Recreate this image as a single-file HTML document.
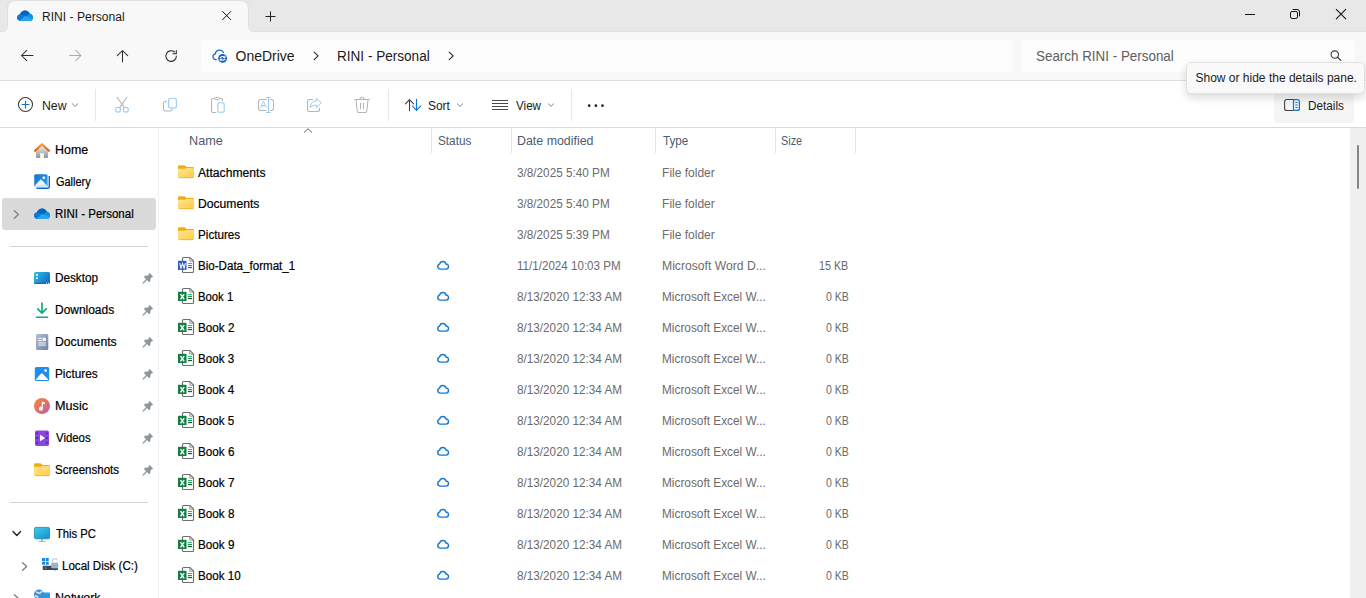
<!DOCTYPE html>
<html lang="en">
<head>
<meta charset="utf-8">
<title>RINI - Personal</title>
<style>
*{box-sizing:border-box;margin:0;padding:0}
html,body{width:1366px;height:598px;overflow:hidden;background:#fff}
body{font-family:"Liberation Sans",sans-serif;font-size:12px;color:#1a1a1a;position:relative}
svg{display:block;overflow:visible}
.t{position:absolute;white-space:nowrap;line-height:16px;transform-origin:0 50%}
.s{color:#000;-webkit-text-stroke:.2px #000}
.i{position:absolute;display:block}
#tabbar{position:absolute;left:0;top:0;width:1366px;height:32px;background:#e8e8e8;box-shadow:inset 0 -1px 0 #dfdfdf}
#tab{position:absolute;left:8px;top:1px;width:240px;height:31px;background:#f8f8f8;border-radius:7px 7px 0 0;box-shadow:0 0 0 1px #e0e0e0;clip-path:inset(-1px -6px 0 -6px)}
#tab:before,#tab:after{content:"";position:absolute;bottom:0;width:5px;height:5px}
#tab:before{left:-5px;background:radial-gradient(circle at 0 0,transparent 3.4px,#dedede 4px,#f8f8f8 5px)}
#tab:after{right:-5px;background:radial-gradient(circle at 100% 0,transparent 3.4px,#dedede 4px,#f8f8f8 5px)}
#nav{position:absolute;left:0;top:32px;width:1366px;height:49px;background:#f8f8f8;border-bottom:1px solid #dfdfdf}
#addr{position:absolute;left:201px;top:8px;width:812px;height:32px;background:#fdfdfd;border-radius:4px}
#search{position:absolute;left:1022px;top:8px;width:333px;height:32px;background:#fdfdfd;border-radius:4px}
#tool{position:absolute;left:0;top:81px;width:1366px;height:47px;background:#fff;border-bottom:1px solid #dadada}
.vsep{position:absolute;top:8px;width:1px;height:32px;background:#e8e8e8}
#details{position:absolute;left:1274px;top:10px;width:80px;height:32px;background:#f5f5f5;border-radius:4px}
#tip{position:absolute;left:1186px;top:62px;width:179px;height:32px;background:#f9f9f9;border:1px solid #e0e0e0;border-radius:5px;box-shadow:0 4px 8px rgba(0,0,0,.14)}
#side{position:absolute;left:0;top:128px;width:159px;height:470px;background:#fff;border-right:1px solid #f1f1f1;overflow:hidden}
.sel{position:absolute;left:2px;top:70px;width:154px;height:32px;background:#dadada;border-radius:3px}
.hr{position:absolute;left:10px;width:138px;height:1px;background:#d6d6d6}
#main{position:absolute;left:159px;top:128px;width:1191px;height:470px;background:#fff;overflow:hidden}
.csep{position:absolute;top:0;width:1px;height:25px;background:#e5e5e5}
.row{position:absolute;left:0;width:860px;height:31px}
#scroll{position:absolute;left:1350px;top:128px;width:16px;height:470px;background:#f0f0f0}
#thumb{position:absolute;left:7px;top:17px;width:2px;height:44px;background:#858585;border-radius:1px}
</style>
</head>
<body>
<header id="tabbar">
  <div id="tab"></div>
  <span class="i" style="left:17px;top:10px"><svg width="16" height="11" viewBox="0 0 16 11" ><defs><clipPath id="oc1"><path d="M3.300 10.900C1.400 10.900 0 9.400 0 7.600 0 5.900 1.200 4.500 2.900 4.300 3.600 2.100 5.700 .6 8.100 .6c2 0 3.800 1.100 4.600 2.900C14.600 3.800 16 5.500 16 7.500c0 1.900-1.500 3.400-3.300 3.400z"/></clipPath></defs><g clip-path="url(#oc1)"><rect width="16" height="11.500" fill="#0f78d4"/><path d="M3 5C4 1 7 0 9 0s4 1.500 4.500 5L8.300 7.500z" fill="#0566bd"/><path d="M9 7l3.300-3.300c2 0 4 1.600 4 4.300v3.500h-4z" fill="#1690e0"/><path d="M0 8C1.500 4.400 5.500 3.800 8.300 6.100L4 11.500H0z" fill="#0f78d4"/><path d="M1.800 11.500L8.300 5.800l7.700 3.700v2z" fill="#28a8ea"/></g></svg></span>
  <span class="t" style="left:42.3px;top:8.8px;transform:scaleX(1.0069)">RINI - Personal</span>
  <span class="i" style="left:222px;top:10px"><svg width="9.4" height="9.4" viewBox="0 -0.9 9.4 9.4" ><path d="M.3 .3L9.1 9.1M9.1 .3L.3 9.1" stroke="#111" stroke-width="1"/></svg></span>
  <span class="i" style="left:265px;top:11px"><svg width="10" height="10" viewBox="-0.5 -0.5 10 10" ><path d="M5 0v10M0 5h10" stroke="#222" stroke-width="1"/></svg></span>
  <span class="i" style="left:1245px;top:14px"><svg width="10" height="1" viewBox="0 0 10 1" ><rect width="10" height="1" fill="#111"/></svg></span>
  <span class="i" style="left:1290px;top:9px"><svg width="10" height="10" viewBox="0 0 10 10" ><rect x=".5" y="2.500" width="7" height="7" rx="1.600" fill="none" stroke="#111" stroke-width="1"/><path d="M2.600 .5H7a2.500 2.500 0 0 1 2.500 2.500V7.400" fill="none" stroke="#111" stroke-width="1"/></svg></span>
  <span class="i" style="left:1335px;top:8px"><svg width="10.6" height="10.6" viewBox="-0.7 -0.8 10.6 10.6" ><path d="M.3 .3L10.299999999999999 10.299999999999999M10.299999999999999 .3L.3 10.299999999999999" stroke="#111" stroke-width="1.05"/></svg></span>
</header>
<nav id="nav">
  <span class="i" style="left:20px;top:17px"><svg width="13" height="12" viewBox="-0.7 -0.5 13 12" ><path d="M12.300 6H1M6 .8L.8 6 6 11.200" fill="none" stroke="#2b2b2b" stroke-width="1.050" stroke-linecap="round" stroke-linejoin="round"/></svg></span>
  <span class="i" style="left:68px;top:17px"><svg width="13" height="12" viewBox="-0.8 -0.5 13 12" ><path d="M.7 6H12M7 .8L12.200 6 7 11.200" fill="none" stroke="#ababab" stroke-width="1.050" stroke-linecap="round" stroke-linejoin="round"/></svg></span>
  <span class="i" style="left:116px;top:17px"><svg width="12" height="13" viewBox="-0.5 -0.5 12 13" ><path d="M6 12.300V1M.8 6.200L6 1l5.200 5.200" fill="none" stroke="#2b2b2b" stroke-width="1.050" stroke-linecap="round" stroke-linejoin="round"/></svg></span>
  <span class="i" style="left:164px;top:17px"><svg width="13" height="13" viewBox="-0.6 -0.6 13 13" ><path d="M11.800 6.500A5.300 5.300 0 1 1 9.900 2.400" fill="none" stroke="#2b2b2b" stroke-width="1.050" stroke-linecap="round"/><path d="M11.700 .8v3.400H8.300" fill="none" stroke="#2b2b2b" stroke-width="1.050" stroke-linecap="round" stroke-linejoin="round"/></svg></span>
  <div id="addr"></div>
  <span class="i" style="left:212px;top:18px"><svg width="15" height="13" viewBox="-0.6 0 15 13" ><path d="M3.700 9.600h-.5a2.850 2.850 0 0 1-.5-5.650A4.300 4.300 0 0 1 10.900 2.600" fill="none" stroke="#1c68c8" stroke-width="1.250" stroke-linecap="round"/><circle cx="10" cy="8.300" r="4.400" fill="#0f5fc6"/><path d="M7.700 7.500c1-1.300 3.300-1.400 4.500 0M12.300 9.200c-1 1.300-3.300 1.400-4.500 0" fill="none" stroke="#fff" stroke-width="1.150" stroke-linecap="round"/><path d="M12.400 5.900v1.700h-1.600M7.600 10.800V9.100h1.600" fill="none" stroke="#fff" stroke-width=".9" stroke-linecap="round" stroke-linejoin="round"/></svg></span>
  <span class="t" style="left:235.5px;top:15.1px;font-size:14px;line-height:18px;color:#1b1b1b">OneDrive</span>
  <span class="i" style="left:313px;top:19px"><svg width="6" height="9" viewBox="-0.3 -0.4 6 9" ><path d="M.8 .7L4.800 4.500.8 8.300" fill="none" stroke="#2a2a2a" stroke-width="1.15" stroke-linecap="round" stroke-linejoin="round"/></svg></span>
  <span class="t" style="left:337.4px;top:15.1px;font-size:14px;line-height:18px;color:#1b1b1b;transform:scaleX(0.9685)">RINI - Personal</span>
  <span class="i" style="left:448px;top:19px"><svg width="6" height="9" viewBox="-0.4 -0.4 6 9" ><path d="M.8 .7L4.800 4.500.8 8.300" fill="none" stroke="#2a2a2a" stroke-width="1.15" stroke-linecap="round" stroke-linejoin="round"/></svg></span>
  <div id="search"></div>
  <span class="t" style="left:1035.7px;top:15.1px;font-size:14px;line-height:18px;color:#5e5e5e;transform:scaleX(0.9572)">Search RINI - Personal</span>
  <span class="i" style="left:1330px;top:17px"><svg width="12" height="12" viewBox="0 -0.8 12 12" ><circle cx="4.800" cy="4.800" r="3.700" fill="none" stroke="#3a3a3a" stroke-width="1.100"/><path d="M7.500 7.500l3.300 3.100" stroke="#3a3a3a" stroke-width="1.250" stroke-linecap="round"/></svg></span>
</nav>
<div id="tool">
  <span class="i" style="left:17px;top:15px"><svg width="16" height="16" viewBox="-0.5 -0.5 16 16" ><circle cx="8" cy="8" r="7.050" fill="none" stroke="#3a3a3a" stroke-width="1.050"/><path d="M8 4.500v7M4.500 8h7" stroke="#0f74d4" stroke-width="1.200" stroke-linecap="round"/></svg></span>
  <span class="t" style="left:41.5px;top:16.8px;transform:scaleX(1.0217)">New</span>
  <span class="i" style="left:72px;top:22px"><svg width="6" height="4" viewBox="0 -0.4 6 4" ><path d="M.3 .4L3 3 5.700 .4" fill="none" stroke="#808080" stroke-width=".95" stroke-linecap="round" stroke-linejoin="round"/></svg></span>
  <div class="vsep" style="left:95px"></div>
  <span class="i" style="left:115px;top:16px"><svg width="14" height="16" viewBox="0 0 14 16" ><path d="M2.200 .3L9.100 10.400M11.800 .3L4.900 10.400" fill="none" stroke="#b4b4b4" stroke-width="1.050" stroke-linecap="round"/><circle cx="3" cy="12.700" r="2.450" fill="none" stroke="#9ccbf2" stroke-width="1.100"/><circle cx="10.900" cy="12.700" r="2.450" fill="none" stroke="#9ccbf2" stroke-width="1.100"/></svg></span>
  <span class="i" style="left:163px;top:16px"><svg width="14" height="14" viewBox="0 -0.5 14 14" ><path d="M3.600 3.700H2.700a2.200 2.200 0 0 0-2.200 2.200V11.200a2.200 2.200 0 0 0 2.200 2.200H7a2.200 2.200 0 0 0 2.100-1.400" fill="none" stroke="#b4b4b4" stroke-width="1.050" stroke-linecap="round"/><rect x="5.600" y=".8" width="7.800" height="9.800" rx="2.200" fill="#fdfdfd" stroke="#9ccbf2" stroke-width="1.100"/></svg></span>
  <span class="i" style="left:211px;top:16px"><svg width="14" height="16" viewBox="0 0 14 16" ><path d="M4.800 15.500H2A1.500 1.500 0 0 1 .5 14V3A1.500 1.500 0 0 1 2 1.500H10A1.500 1.500 0 0 1 11.500 3v.8" fill="none" stroke="#b4b4b4" stroke-width="1.050" stroke-linecap="round"/><rect x="3.600" y=".4" width="5" height="2.300" rx="1.150" fill="#fff" stroke="#b4b4b4" stroke-width="1"/><rect x="6.800" y="5.700" width="6.400" height="9.600" rx="1.600" fill="#fdfdfd" stroke="#9ccbf2" stroke-width="1.100"/></svg></span>
  <span class="i" style="left:258px;top:16px"><svg width="16" height="16" viewBox="0 0 16 16" ><path d="M8.700 2.500H3A2.500 2.500 0 0 0 .5 5v6A2.500 2.500 0 0 0 3 13.500H8.700M12.200 2.500H13A2.500 2.500 0 0 1 15.500 5v6A2.500 2.500 0 0 1 13 13.500h-.8" fill="none" stroke="#b4b4b4" stroke-width="1.050"/><path d="M10.500 .5v15M8.300 .5h4.400M8.300 15.500h4.400" stroke="#9ccbf2" stroke-width="1.100"/><path d="M2.600 10.600L5.500 4.200l2.900 6.400M3.600 8.700h3.800" fill="none" stroke="#9ccbf2" stroke-width="1"/></svg></span>
  <span class="i" style="left:307px;top:17px"><svg width="15" height="14" viewBox="0 0 15 14" ><path d="M5.600 1.500H2.500a2 2 0 0 0-2 2v8a2 2 0 0 0 2 2h8a2 2 0 0 0 2-2V10.300" fill="none" stroke="#b4b4b4" stroke-width="1.050" stroke-linecap="round"/><path d="M9.600 .4l4.800 4.500-4.800 4.600V7.200C6.600 7 4.500 7.800 3 9.600 3.300 6 5.600 3 9.600 2.600z" fill="none" stroke="#9ccbf2" stroke-width="1" stroke-linejoin="round"/></svg></span>
  <span class="i" style="left:354px;top:16px"><svg width="16" height="16" viewBox="0 0 16 16" ><path d="M.8 2.500h14.400M6 2.300a2 2 0 0 1 4 0M2 2.700L3.200 14a1.700 1.700 0 0 0 1.700 1.500h6.200A1.700 1.700 0 0 0 12.800 14L14 2.700M6.500 6.200v5.500M9.500 6.200v5.500" fill="none" stroke="#b4b4b4" stroke-width="1.050" stroke-linecap="round"/></svg></span>
  <div class="vsep" style="left:388px"></div>
  <span class="i" style="left:405px;top:18px"><svg width="17" height="12" viewBox="0 0 17 12" ><path d="M4.500 11.700V.7M.4 4.900L4.500 .7l4.100 4.200" fill="none" stroke="#3a3a3a" stroke-width="1.050" stroke-linecap="round" stroke-linejoin="round"/><path d="M11.500 .3v11.100M7.400 7.200l4.100 4.200 4.100-4.200" fill="none" stroke="#0f74d4" stroke-width="1.150" stroke-linecap="round" stroke-linejoin="round"/></svg></span>
  <span class="t" style="left:428.1px;top:16.8px;transform:scaleX(0.9953)">Sort</span>
  <span class="i" style="left:457px;top:22px"><svg width="6" height="4" viewBox="0 -0.4 6 4" ><path d="M.3 .4L3 3 5.700 .4" fill="none" stroke="#808080" stroke-width=".95" stroke-linecap="round" stroke-linejoin="round"/></svg></span>
  <span class="i" style="left:492px;top:19px"><svg width="16" height="10" viewBox="0 0 16 10" ><path d="M0 .5h16M0 3.500h16M0 6.500h16M0 9.500h16" stroke="#4a4a4a" stroke-width="1"/></svg></span>
  <span class="t" style="left:515.6px;top:16.8px;transform:scaleX(0.9692)">View</span>
  <span class="i" style="left:548px;top:22px"><svg width="6" height="4" viewBox="0 -0.4 6 4" ><path d="M.3 .4L3 3 5.700 .4" fill="none" stroke="#808080" stroke-width=".95" stroke-linecap="round" stroke-linejoin="round"/></svg></span>
  <div class="vsep" style="left:571px"></div>
  <span class="i" style="left:587px;top:23px"><svg width="17" height="3" viewBox="-0.8 -0.3 17 3" ><circle cx="1.400" cy="1.400" r="1.350" fill="#222"/><circle cx="8.050" cy="1.400" r="1.350" fill="#222"/><circle cx="14.700" cy="1.400" r="1.350" fill="#222"/></svg></span>
  <div id="details"></div>
  <span class="i" style="left:1284px;top:18px"><svg width="16" height="12" viewBox="0 0 16 12" ><path d="M9.500 .550H2.600a2 2 0 0 0-2 2v6.900a2 2 0 0 0 2 2H9.500" fill="none" stroke="#444" stroke-width="1.100"/><path d="M9.500 .550h3.900a2 2 0 0 1 2 2v6.900a2 2 0 0 1-2 2H9.500z" fill="none" stroke="#0f74d4" stroke-width="1.200"/><path d="M11.400 3.500h2.200M11.400 6h2.200M11.400 8.500h2.200" stroke="#0f74d4" stroke-width="1"/></svg></span>
  <span class="t" style="left:1307.8px;top:16.8px;transform:scaleX(0.9787)">Details</span>
</div>
<aside id="side">
  <div class="sel"></div>
  <span class="i" style="left:34px;top:14px"><svg width="16" height="16" viewBox="0 0 16 16" ><defs><linearGradient id="hg" x1="0" y1="0" x2="0" y2="1"><stop offset="0" stop-color="#f0f0f0"/><stop offset="1" stop-color="#939393"/></linearGradient><linearGradient id="hr" x1="0" y1="0" x2="0" y2="1"><stop offset="0" stop-color="#f9a02c"/><stop offset="1" stop-color="#dd5a18"/></linearGradient></defs><path d="M2 8L8 3.200l6 4.800v7a1 1 0 0 1-1 1H9.800v-4.800H6.200V16H3a1 1 0 0 1-1-1z" fill="url(#hg)"/><path d="M1 8.700L8 2.400l7 6.300" fill="none" stroke="url(#hr)" stroke-width="2.200" stroke-linecap="round" stroke-linejoin="round"/></svg></span>
  <span class="t s" style="left:54.7px;top:13.8px;transform:scaleX(1.0353)">Home</span>
  <span class="i" style="left:34px;top:46px"><svg width="16" height="16" viewBox="0 0 16 16" ><defs><linearGradient id="gg" x1="0" y1="0" x2="1" y2="1"><stop offset="0" stop-color="#1470cf"/><stop offset="1" stop-color="#34a4ee"/></linearGradient><linearGradient id="gm" x1="0" y1="0" x2="0" y2="1"><stop offset=".35" stop-color="#fff"/><stop offset="1" stop-color="#bfe2fa"/></linearGradient></defs><path d="M3 14.300h10.800a1.500 1.500 0 0 0 1.500-1.500V2.500" fill="none" stroke="#1565c0" stroke-width="1.400" stroke-linecap="round"/><rect x=".2" y=".2" width="13.400" height="13" rx="1.600" fill="url(#gg)"/><path d="M.2 12.200L6.900 5.200l6.700 7v.2a.8.800 0 0 1-.8.800H1a.8.800 0 0 1-.8-.8z" fill="url(#gm)"/><circle cx="9.800" cy="3.800" r="1.300" fill="#fff"/></svg></span>
  <span class="t s" style="left:56.0px;top:45.8px;transform:scaleX(0.9133)">Gallery</span>
  <span class="i" style="left:34px;top:80px"><svg width="16" height="11" viewBox="0 0 16 11" ><defs><clipPath id="oc2"><path d="M3.300 10.900C1.400 10.900 0 9.400 0 7.600 0 5.900 1.200 4.500 2.900 4.300 3.600 2.100 5.700 .6 8.100 .6c2 0 3.800 1.100 4.600 2.900C14.600 3.800 16 5.500 16 7.500c0 1.900-1.500 3.400-3.300 3.400z"/></clipPath></defs><g clip-path="url(#oc2)"><rect width="16" height="11.500" fill="#0f78d4"/><path d="M3 5C4 1 7 0 9 0s4 1.500 4.500 5L8.300 7.500z" fill="#0566bd"/><path d="M9 7l3.300-3.300c2 0 4 1.600 4 4.300v3.500h-4z" fill="#1690e0"/><path d="M0 8C1.500 4.400 5.500 3.800 8.300 6.100L4 11.500H0z" fill="#0f78d4"/><path d="M1.800 11.500L8.300 5.800l7.700 3.700v2z" fill="#28a8ea"/></g></svg></span>
  <span class="t s" style="left:54.8px;top:77.8px;transform:scaleX(0.9595)">RINI - Personal</span>
  <span class="i" style="left:13px;top:82px"><svg width="6" height="9" viewBox="-0.6 0 6 9" ><path d="M.8 .7L4.800 4.500.8 8.300" fill="none" stroke="#858585" stroke-width="1.5" stroke-linecap="round" stroke-linejoin="round"/></svg></span>
  <span class="i" style="left:34px;top:142px"><svg width="16" height="16" viewBox="0 0 16 16" ><defs><linearGradient id="dg" x1="0" y1="0" x2="1" y2=".6"><stop offset="0" stop-color="#2fc0e6"/><stop offset="1" stop-color="#186fcb"/></linearGradient></defs><rect x="0" y="2" width="16" height="12" rx="1.500" fill="url(#dg)"/><rect x="2" y="4" width="1.800" height="1.800" fill="#eefaff"/><rect x="2" y="7.300" width="1.800" height="1.800" fill="#eefaff"/><path d="M.3 13.300h15.400" stroke="#0f4f9c" stroke-width=".9" opacity=".75"/><rect x="12" y="12.800" width="1" height="1.200" fill="#e6f3fb"/><rect x="14" y="12.800" width="1" height="1.200" fill="#e6f3fb"/></svg></span>
  <span class="t s" style="left:54.8px;top:141.8px;transform:scaleX(0.9778)">Desktop</span>
  <span class="i" style="left:142px;top:143px"><svg width="12" height="12" viewBox="0 -0.8 12 12" ><path d="M7.400 1l3.900 3.900-1.400.5-1.500 1.600.1 2.200-1.300 1.200L1.900 5.100l1.200-1.300 2.200.1L6.900 2.400z" fill="#8d989f"/><path d="M4.500 7.800L1.200 11.100" stroke="#8d989f" stroke-width="1.350" stroke-linecap="round"/></svg></span>
  <span class="i" style="left:34px;top:174px"><svg width="16" height="16" viewBox="0 0 16 16" ><defs><linearGradient id="dlg" x1="0" y1="0" x2="0" y2="1"><stop offset="0" stop-color="#1db35c"/><stop offset="1" stop-color="#12a594"/></linearGradient></defs><path d="M8 1v9.900M3.700 6.900L8 11.100l4.300-4.200" fill="none" stroke="url(#dlg)" stroke-width="1.700" stroke-linecap="round" stroke-linejoin="round"/><path d="M2.300 15.300h11.400" stroke="#12a594" stroke-width="1.400" stroke-linecap="round"/></svg></span>
  <span class="t s" style="left:54.8px;top:173.8px;transform:scaleX(0.9956)">Downloads</span>
  <span class="i" style="left:142px;top:175px"><svg width="12" height="12" viewBox="0 -0.8 12 12" ><path d="M7.400 1l3.900 3.900-1.400.5-1.500 1.600.1 2.200-1.300 1.200L1.900 5.100l1.200-1.300 2.200.1L6.900 2.400z" fill="#8d989f"/><path d="M4.500 7.800L1.200 11.100" stroke="#8d989f" stroke-width="1.350" stroke-linecap="round"/></svg></span>
  <span class="i" style="left:34px;top:206px"><svg width="16" height="16" viewBox="0 0 16 16" ><defs><linearGradient id="dcg" x1="0" y1="0" x2="1" y2="1"><stop offset="0" stop-color="#b3c1d6"/><stop offset="1" stop-color="#6a82a6"/></linearGradient></defs><rect x="2" y="0" width="12.300" height="16" rx="1.500" fill="url(#dcg)"/><rect x="8.600" y="3.800" width="3.200" height="3.200" fill="#fff"/><path d="M4.300 4.300h3.300M4.300 6.500h3.300M4.300 8.900h7.500M4.300 11.100h7.500" stroke="#fff" stroke-width="1"/></svg></span>
  <span class="t s" style="left:54.8px;top:205.8px;transform:scaleX(1.0160)">Documents</span>
  <span class="i" style="left:142px;top:207px"><svg width="12" height="12" viewBox="0 -0.8 12 12" ><path d="M7.400 1l3.900 3.900-1.400.5-1.500 1.600.1 2.200-1.300 1.200L1.900 5.100l1.200-1.300 2.200.1L6.900 2.400z" fill="#8d989f"/><path d="M4.500 7.800L1.200 11.100" stroke="#8d989f" stroke-width="1.350" stroke-linecap="round"/></svg></span>
  <span class="i" style="left:34px;top:238px"><svg width="16" height="16" viewBox="0 0 16 16" ><rect x=".8" y="1" width="14.400" height="14" rx="1.600" fill="#1f8fea"/><path d="M2 13.300L7.200 7.600a.8.800 0 0 1 1.200 0L14 13.300a.5.500 0 0 1-.4.800H2.400a.5.500 0 0 1-.4-.8z" fill="#fff"/><circle cx="11.600" cy="4.600" r="1.300" fill="#fff"/></svg></span>
  <span class="t s" style="left:54.8px;top:237.8px;transform:scaleX(0.9833)">Pictures</span>
  <span class="i" style="left:142px;top:239px"><svg width="12" height="12" viewBox="0 -0.8 12 12" ><path d="M7.400 1l3.900 3.900-1.400.5-1.500 1.600.1 2.200-1.300 1.200L1.900 5.100l1.200-1.300 2.200.1L6.900 2.400z" fill="#8d989f"/><path d="M4.500 7.800L1.200 11.100" stroke="#8d989f" stroke-width="1.350" stroke-linecap="round"/></svg></span>
  <span class="i" style="left:34px;top:270px"><svg width="16" height="16" viewBox="0 0 16 16" ><defs><linearGradient id="mg" x1="0" y1="0" x2="1" y2="1"><stop offset="0" stop-color="#f0883a"/><stop offset=".55" stop-color="#e0706a"/><stop offset="1" stop-color="#b45fc0"/></linearGradient></defs><circle cx="8" cy="8" r="8" fill="url(#mg)"/><path d="M7.800 3.500l3 .9v1.800l-1.900-.55v5a2 2 0 1 1-1.100-1.800z" fill="#fff"/></svg></span>
  <span class="t s" style="left:54.7px;top:269.8px;transform:scaleX(1.0533)">Music</span>
  <span class="i" style="left:142px;top:271px"><svg width="12" height="12" viewBox="0 -0.8 12 12" ><path d="M7.400 1l3.900 3.900-1.400.5-1.500 1.600.1 2.200-1.300 1.200L1.900 5.100l1.200-1.300 2.200.1L6.900 2.400z" fill="#8d989f"/><path d="M4.500 7.800L1.200 11.100" stroke="#8d989f" stroke-width="1.350" stroke-linecap="round"/></svg></span>
  <span class="i" style="left:34px;top:302px"><svg width="16" height="16" viewBox="0 0 16 16" ><rect x="1" y=".5" width="14" height="15.500" rx="1.800" fill="#8c45e0"/><path d="M6 4.800v6.400l5.200-3.200z" fill="#fff"/><g fill="#4a1f9a"><rect x="2.300" y="2.500" width="1.700" height="1.700"/><rect x="2.300" y="7.200" width="1.700" height="1.700"/><rect x="2.300" y="11.900" width="1.700" height="1.700"/><rect x="12" y="2.500" width="1.700" height="1.700"/><rect x="12" y="7.200" width="1.700" height="1.700"/><rect x="12" y="11.900" width="1.700" height="1.700"/></g></svg></span>
  <span class="t s" style="left:55.8px;top:301.8px;transform:scaleX(0.9490)">Videos</span>
  <span class="i" style="left:142px;top:303px"><svg width="12" height="12" viewBox="0 -0.8 12 12" ><path d="M7.400 1l3.900 3.900-1.400.5-1.500 1.600.1 2.200-1.300 1.200L1.900 5.100l1.200-1.300 2.200.1L6.900 2.400z" fill="#8d989f"/><path d="M4.500 7.800L1.200 11.100" stroke="#8d989f" stroke-width="1.350" stroke-linecap="round"/></svg></span>
  <span class="i" style="left:34px;top:333px"><svg width="16" height="16" viewBox="0 -0.5 16 16" ><defs><linearGradient id="fg0" x1="0" y1="0" x2="1" y2="1"><stop offset="0" stop-color="#ffe694"/><stop offset="1" stop-color="#ffcb42"/></linearGradient></defs><path d="M0 3a1.300 1.300 0 0 1 1.300-1.300H6c.5 0 .9.200 1.200.5L8.600 3.600h6.100A1.300 1.300 0 0 1 16 4.900V9H0z" fill="#efad13"/><path d="M0 6.300a1 1 0 0 1 1-1h5.600c.4 0 .8-.1 1.100-.4l.6-.4H15a1 1 0 0 1 1 1v7.700a1.300 1.300 0 0 1-1.300 1.300H1.300A1.300 1.300 0 0 1 0 13.200z" fill="url(#fg0)"/><path d="M.8 14.200h14.400" stroke="#e5a313" stroke-width=".7" opacity=".8"/></svg></span>
  <span class="t s" style="left:55.3px;top:333.8px;transform:scaleX(0.9595)">Screenshots</span>
  <span class="i" style="left:142px;top:335px"><svg width="12" height="12" viewBox="0 -0.8 12 12" ><path d="M7.400 1l3.900 3.900-1.400.5-1.500 1.600.1 2.200-1.300 1.200L1.900 5.100l1.200-1.300 2.200.1L6.900 2.400z" fill="#8d989f"/><path d="M4.500 7.800L1.200 11.100" stroke="#8d989f" stroke-width="1.350" stroke-linecap="round"/></svg></span>
  <span class="i" style="left:34px;top:399px"><svg width="16" height="16" viewBox="0 0 16 16" ><defs><linearGradient id="pg" x1="0" y1="0" x2=".8" y2="1"><stop offset="0" stop-color="#3fcde6"/><stop offset="1" stop-color="#1c92cf"/></linearGradient></defs><path d="M7.300 11.500h1.400v2.800H7.300z" fill="#9aa3ab"/><path d="M4.500 14h7v1h-7z" fill="#a9b1b9"/><rect x=".4" y=".4" width="15.200" height="11.400" rx="1.500" fill="url(#pg)" stroke="#1787ad" stroke-width=".8"/></svg></span>
  <span class="t s" style="left:55.6px;top:397.8px;transform:scaleX(0.9357)">This PC</span>
  <span class="i" style="left:12px;top:402px"><svg width="9" height="6" viewBox="-0.3 -0.8 9 6" ><path d="M.7 .8L4.500 4.800 8.300 .8" fill="none" stroke="#222" stroke-width="1.4" stroke-linecap="round" stroke-linejoin="round"/></svg></span>
  <div class="hr" style="top:118px"></div>
  <div class="hr" style="top:374px"></div>
  <span class="i" style="left:21px;top:434px"><svg width="6" height="9" viewBox="-0.8 0 6 9" ><path d="M.8 .7L4.800 4.500.8 8.300" fill="none" stroke="#858585" stroke-width="1.5" stroke-linecap="round" stroke-linejoin="round"/></svg></span>
  <span class="i" style="left:41px;top:429px"><svg width="17" height="15" viewBox="-0.8 -0.3 17 15" ><g fill="#1b86e3"><rect x=".2" y=".7" width="3" height="3"/><rect x="3.900" y=".7" width="3" height="3"/><rect x=".2" y="4.400" width="3" height="3"/><rect x="3.900" y="4.400" width="3" height="3"/></g><path d="M10.600 5.300V3.600a2.300 2.300 0 0 1 4.500-.6" fill="none" stroke="#c9ccd0" stroke-width="1.200"/><rect x=".9" y="8.400" width="15.300" height="4.300" rx=".8" fill="#42474d"/><rect x="9.600" y="5.200" width="6.800" height="5.800" rx=".8" fill="#c4c8cd"/><path d="M9.600 6.600h6.800M9.600 9.600h6.800" stroke="#5aa2e6" stroke-width=".8"/><path d="M9.600 8.100h6.800" stroke="#8f9398" stroke-width=".7"/><rect x="3.200" y="10.200" width="1.500" height="1.100" fill="#46e26a"/><path d="M12.200 12.700l.9 1.600.9-1.600z" fill="#b5b8bc"/></svg></span>
  <span class="t s" style="left:62.4px;top:429.8px;transform:scaleX(0.9636)">Local Disk (C:)</span>
  <span class="i" style="left:13px;top:466px"><svg width="6" height="9" viewBox="-0.6 0 6 9" ><path d="M.8 .7L4.800 4.500.8 8.300" fill="none" stroke="#858585" stroke-width="1.5" stroke-linecap="round" stroke-linejoin="round"/></svg></span>
  <span class="i" style="left:34px;top:461px"><svg width="16" height="16" viewBox="0 -0.5 16 16" ><rect x="5" y="3" width="11" height="9" rx="1" fill="#2a9be0"/><circle cx="5" cy="5" r="5" fill="#3f8fd6"/><path d="M2 2.500c1.500 0 2 1.500 3.500 1.200S7 1.500 8.500 2M1 6.500c2-.5 3 1 2.500 2.500" fill="none" stroke="#dcefe6" stroke-width="1.500"/></svg></span>
  <span class="t s" style="left:54.8px;top:461.8px;transform:scaleX(1.0349)">Network</span>
</aside>
<main id="main">
  <span class="i" style="left:144px;top:0px"><svg width="9" height="5" viewBox="-0.5 0 9 5" ><path d="M.5 4.500L4.500 .7 8.500 4.500" fill="none" stroke="#666" stroke-width="1"/></svg></span>
  <div class="csep" style="left:272px"></div>
  <div class="csep" style="left:352px"></div>
  <div class="csep" style="left:496px"></div>
  <div class="csep" style="left:616px"></div>
  <div class="csep" style="left:696px"></div>
  <span class="t" style="left:30.2px;top:4.8px;color:#4c5b70;transform:scaleX(1.0557)">Name</span>
  <span class="t" style="left:279.1px;top:4.8px;color:#4c5b70;transform:scaleX(0.9800)">Status</span>
  <span class="t" style="left:357.9px;top:4.8px;color:#4c5b70;transform:scaleX(1.0331)">Date modified</span>
  <span class="t" style="left:503.8px;top:4.8px;color:#4c5b70;transform:scaleX(0.9703)">Type</span>
  <span class="t" style="left:621.7px;top:4.8px;color:#4c5b70;transform:scaleX(0.9022)">Size</span>
  <div class="row" style="top:29px"><span class="i" style="left:19px;top:6px"><svg width="16" height="16" viewBox="0 -0.5 16 16" ><defs><linearGradient id="fg1" x1="0" y1="0" x2="1" y2="1"><stop offset="0" stop-color="#ffe694"/><stop offset="1" stop-color="#ffcb42"/></linearGradient></defs><path d="M0 3a1.300 1.300 0 0 1 1.300-1.300H6c.5 0 .9.200 1.200.5L8.600 3.600h6.100A1.300 1.300 0 0 1 16 4.900V9H0z" fill="#efad13"/><path d="M0 6.300a1 1 0 0 1 1-1h5.600c.4 0 .8-.1 1.100-.4l.6-.4H15a1 1 0 0 1 1 1v7.700a1.300 1.300 0 0 1-1.300 1.300H1.300A1.300 1.300 0 0 1 0 13.200z" fill="url(#fg1)"/><path d="M.8 14.200h14.400" stroke="#e5a313" stroke-width=".7" opacity=".8"/></svg></span><span class="t s" style="left:39.1px;top:7.8px;transform:scaleX(1.0113)">Attachments</span><span class="t" style="left:358.3px;top:7.8px;color:#6b6b6b;transform:scaleX(0.9787)">3/8/2025 5:40 PM</span><span class="t" style="left:503.1px;top:7.8px;color:#6b6b6b">File folder</span></div>
  <div class="row" style="top:60px"><span class="i" style="left:19px;top:6px"><svg width="16" height="16" viewBox="0 -0.5 16 16" ><defs><linearGradient id="fg2" x1="0" y1="0" x2="1" y2="1"><stop offset="0" stop-color="#ffe694"/><stop offset="1" stop-color="#ffcb42"/></linearGradient></defs><path d="M0 3a1.300 1.300 0 0 1 1.300-1.300H6c.5 0 .9.200 1.200.5L8.600 3.600h6.100A1.300 1.300 0 0 1 16 4.900V9H0z" fill="#efad13"/><path d="M0 6.300a1 1 0 0 1 1-1h5.600c.4 0 .8-.1 1.100-.4l.6-.4H15a1 1 0 0 1 1 1v7.700a1.300 1.300 0 0 1-1.300 1.300H1.300A1.300 1.300 0 0 1 0 13.200z" fill="url(#fg2)"/><path d="M.8 14.200h14.400" stroke="#e5a313" stroke-width=".7" opacity=".8"/></svg></span><span class="t s" style="left:38.6px;top:7.8px;transform:scaleX(1.0110)">Documents</span><span class="t" style="left:358.3px;top:7.8px;color:#6b6b6b;transform:scaleX(0.9787)">3/8/2025 5:40 PM</span><span class="t" style="left:503.1px;top:7.8px;color:#6b6b6b">File folder</span></div>
  <div class="row" style="top:91px"><span class="i" style="left:19px;top:6px"><svg width="16" height="16" viewBox="0 -0.5 16 16" ><defs><linearGradient id="fg3" x1="0" y1="0" x2="1" y2="1"><stop offset="0" stop-color="#ffe694"/><stop offset="1" stop-color="#ffcb42"/></linearGradient></defs><path d="M0 3a1.300 1.300 0 0 1 1.300-1.300H6c.5 0 .9.200 1.200.5L8.600 3.600h6.100A1.300 1.300 0 0 1 16 4.900V9H0z" fill="#efad13"/><path d="M0 6.300a1 1 0 0 1 1-1h5.600c.4 0 .8-.1 1.100-.4l.6-.4H15a1 1 0 0 1 1 1v7.700a1.300 1.300 0 0 1-1.300 1.300H1.300A1.300 1.300 0 0 1 0 13.200z" fill="url(#fg3)"/><path d="M.8 14.200h14.400" stroke="#e5a313" stroke-width=".7" opacity=".8"/></svg></span><span class="t s" style="left:38.6px;top:7.8px;transform:scaleX(0.9738)">Pictures</span><span class="t" style="left:358.3px;top:7.8px;color:#6b6b6b;transform:scaleX(0.9787)">3/8/2025 5:39 PM</span><span class="t" style="left:503.1px;top:7.8px;color:#6b6b6b">File folder</span></div>
  <div class="row" style="top:122px"><span class="i" style="left:19px;top:7px"><svg width="16" height="16" viewBox="0 0 16 16" ><path d="M4.500 1.500a1 1 0 0 1 1-1h6.400L15.500 4.100V14.500a1 1 0 0 1-1 1h-9a1 1 0 0 1-1-1z" fill="#fff" stroke="#6f6f6f" stroke-width="1.150"/><path d="M11.800 .8v3.400h3.400" fill="none" stroke="#8a8a8a" stroke-width=".9"/><rect x="0" y="3.800" width="8.500" height="9.200" fill="#2b5fc6"/><path d="M10 6.500h4" stroke="#2fa4f2" stroke-width="1"/><path d="M10 8.600h4" stroke="#2a72d8" stroke-width="1.100"/><path d="M10 10.600h4" stroke="#1f55b8" stroke-width="1.100"/><path d="M1.700 6.200l1.250 5 1.600-4.600 1.600 4.600 1.250-5" fill="none" stroke="#fff" stroke-width="1.050" stroke-linejoin="miter"/></svg></span><span class="t s" style="left:38.6px;top:7.8px;transform:scaleX(0.9652)">Bio-Data_format_1</span><span class="i" style="left:278px;top:10px"><svg width="12" height="9" viewBox="0 -0.7 12 9" ><path d="M3.300 8.400A2.550 2.550 0 0 1 2.600 3.400 3.300 3.300 0 0 1 9 3.300 2.550 2.550 0 0 1 8.900 8.400z" fill="none" stroke="#117ad8" stroke-width="1.400" stroke-linejoin="round"/></svg></span><span class="t" style="left:358.0px;top:7.8px;color:#6b6b6b;transform:scaleX(0.9668)">11/1/2024 10:03 PM</span><span class="t" style="left:502.6px;top:7.8px;color:#6b6b6b;transform:scaleX(1.0129)">Microsoft Word D...</span><span class="t" style="left:660.1px;top:7.8px;color:#6b6b6b;transform:scaleX(0.8952)">15 KB</span></div>
  <div class="row" style="top:153px"><span class="i" style="left:19px;top:7px"><svg width="16" height="16" viewBox="0 0 16 16" ><path d="M4.500 1.500a1 1 0 0 1 1-1h6.400L15.500 4.100V14.500a1 1 0 0 1-1 1h-9a1 1 0 0 1-1-1z" fill="#fff" stroke="#6f6f6f" stroke-width="1.150"/><path d="M11.800 .8v3.400h3.400" fill="none" stroke="#8a8a8a" stroke-width=".9"/><rect x="0" y="3.800" width="8.500" height="9.200" fill="#147d43"/><path d="M10 6.500h4" stroke="#22c06c" stroke-width="1"/><path d="M10 8.600h4" stroke="#1a8a49" stroke-width="1.100"/><path d="M10 10.600h4" stroke="#0f4d2a" stroke-width="1.100"/><path d="M2.500 6.100l3.700 5.200M6.200 6.100l-3.700 5.200" fill="none" stroke="#fff" stroke-width="1.450"/></svg></span><span class="t s" style="left:38.7px;top:7.8px;transform:scaleX(0.9417)">Book 1</span><span class="i" style="left:278px;top:10px"><svg width="12" height="9" viewBox="0 -0.7 12 9" ><path d="M3.300 8.400A2.550 2.550 0 0 1 2.600 3.400 3.300 3.300 0 0 1 9 3.300 2.550 2.550 0 0 1 8.900 8.400z" fill="none" stroke="#117ad8" stroke-width="1.400" stroke-linejoin="round"/></svg></span><span class="t" style="left:358.3px;top:7.8px;color:#6b6b6b;transform:scaleX(0.9774)">8/13/2020 12:33 AM</span><span class="t" style="left:502.6px;top:7.8px;color:#6b6b6b;transform:scaleX(0.9860)">Microsoft Excel W...</span><span class="t" style="left:666.6px;top:7.8px;color:#6b6b6b;transform:scaleX(0.8800)">0 KB</span></div>
  <div class="row" style="top:184px"><span class="i" style="left:19px;top:7px"><svg width="16" height="16" viewBox="0 0 16 16" ><path d="M4.500 1.500a1 1 0 0 1 1-1h6.400L15.500 4.100V14.500a1 1 0 0 1-1 1h-9a1 1 0 0 1-1-1z" fill="#fff" stroke="#6f6f6f" stroke-width="1.150"/><path d="M11.800 .8v3.400h3.400" fill="none" stroke="#8a8a8a" stroke-width=".9"/><rect x="0" y="3.800" width="8.500" height="9.200" fill="#147d43"/><path d="M10 6.500h4" stroke="#22c06c" stroke-width="1"/><path d="M10 8.600h4" stroke="#1a8a49" stroke-width="1.100"/><path d="M10 10.600h4" stroke="#0f4d2a" stroke-width="1.100"/><path d="M2.500 6.100l3.700 5.200M6.200 6.100l-3.700 5.200" fill="none" stroke="#fff" stroke-width="1.450"/></svg></span><span class="t s" style="left:38.6px;top:7.8px;transform:scaleX(0.9762)">Book 2</span><span class="i" style="left:278px;top:10px"><svg width="12" height="9" viewBox="0 -0.7 12 9" ><path d="M3.300 8.400A2.550 2.550 0 0 1 2.600 3.400 3.300 3.300 0 0 1 9 3.300 2.550 2.550 0 0 1 8.900 8.400z" fill="none" stroke="#117ad8" stroke-width="1.400" stroke-linejoin="round"/></svg></span><span class="t" style="left:358.3px;top:7.8px;color:#6b6b6b;transform:scaleX(0.9774)">8/13/2020 12:34 AM</span><span class="t" style="left:502.6px;top:7.8px;color:#6b6b6b;transform:scaleX(0.9860)">Microsoft Excel W...</span><span class="t" style="left:666.6px;top:7.8px;color:#6b6b6b;transform:scaleX(0.8800)">0 KB</span></div>
  <div class="row" style="top:215px"><span class="i" style="left:19px;top:7px"><svg width="16" height="16" viewBox="0 0 16 16" ><path d="M4.500 1.500a1 1 0 0 1 1-1h6.400L15.500 4.100V14.500a1 1 0 0 1-1 1h-9a1 1 0 0 1-1-1z" fill="#fff" stroke="#6f6f6f" stroke-width="1.150"/><path d="M11.800 .8v3.400h3.400" fill="none" stroke="#8a8a8a" stroke-width=".9"/><rect x="0" y="3.800" width="8.500" height="9.200" fill="#147d43"/><path d="M10 6.500h4" stroke="#22c06c" stroke-width="1"/><path d="M10 8.600h4" stroke="#1a8a49" stroke-width="1.100"/><path d="M10 10.600h4" stroke="#0f4d2a" stroke-width="1.100"/><path d="M2.500 6.100l3.700 5.200M6.200 6.100l-3.700 5.200" fill="none" stroke="#fff" stroke-width="1.450"/></svg></span><span class="t s" style="left:38.6px;top:7.8px;transform:scaleX(0.9694)">Book 3</span><span class="i" style="left:278px;top:10px"><svg width="12" height="9" viewBox="0 -0.7 12 9" ><path d="M3.300 8.400A2.550 2.550 0 0 1 2.600 3.400 3.300 3.300 0 0 1 9 3.300 2.550 2.550 0 0 1 8.900 8.400z" fill="none" stroke="#117ad8" stroke-width="1.400" stroke-linejoin="round"/></svg></span><span class="t" style="left:358.3px;top:7.8px;color:#6b6b6b;transform:scaleX(0.9774)">8/13/2020 12:34 AM</span><span class="t" style="left:502.6px;top:7.8px;color:#6b6b6b;transform:scaleX(0.9860)">Microsoft Excel W...</span><span class="t" style="left:666.6px;top:7.8px;color:#6b6b6b;transform:scaleX(0.8800)">0 KB</span></div>
  <div class="row" style="top:246px"><span class="i" style="left:19px;top:7px"><svg width="16" height="16" viewBox="0 0 16 16" ><path d="M4.500 1.500a1 1 0 0 1 1-1h6.400L15.500 4.100V14.500a1 1 0 0 1-1 1h-9a1 1 0 0 1-1-1z" fill="#fff" stroke="#6f6f6f" stroke-width="1.150"/><path d="M11.800 .8v3.400h3.400" fill="none" stroke="#8a8a8a" stroke-width=".9"/><rect x="0" y="3.800" width="8.500" height="9.200" fill="#147d43"/><path d="M10 6.500h4" stroke="#22c06c" stroke-width="1"/><path d="M10 8.600h4" stroke="#1a8a49" stroke-width="1.100"/><path d="M10 10.600h4" stroke="#0f4d2a" stroke-width="1.100"/><path d="M2.500 6.100l3.700 5.200M6.200 6.100l-3.700 5.200" fill="none" stroke="#fff" stroke-width="1.450"/></svg></span><span class="t s" style="left:38.6px;top:7.8px;transform:scaleX(0.9702)">Book 4</span><span class="i" style="left:278px;top:10px"><svg width="12" height="9" viewBox="0 -0.7 12 9" ><path d="M3.300 8.400A2.550 2.550 0 0 1 2.600 3.400 3.300 3.300 0 0 1 9 3.300 2.550 2.550 0 0 1 8.900 8.400z" fill="none" stroke="#117ad8" stroke-width="1.400" stroke-linejoin="round"/></svg></span><span class="t" style="left:358.3px;top:7.8px;color:#6b6b6b;transform:scaleX(0.9774)">8/13/2020 12:34 AM</span><span class="t" style="left:502.6px;top:7.8px;color:#6b6b6b;transform:scaleX(0.9860)">Microsoft Excel W...</span><span class="t" style="left:666.6px;top:7.8px;color:#6b6b6b;transform:scaleX(0.8800)">0 KB</span></div>
  <div class="row" style="top:277px"><span class="i" style="left:19px;top:7px"><svg width="16" height="16" viewBox="0 0 16 16" ><path d="M4.500 1.500a1 1 0 0 1 1-1h6.400L15.500 4.100V14.500a1 1 0 0 1-1 1h-9a1 1 0 0 1-1-1z" fill="#fff" stroke="#6f6f6f" stroke-width="1.150"/><path d="M11.800 .8v3.400h3.400" fill="none" stroke="#8a8a8a" stroke-width=".9"/><rect x="0" y="3.800" width="8.500" height="9.200" fill="#147d43"/><path d="M10 6.500h4" stroke="#22c06c" stroke-width="1"/><path d="M10 8.600h4" stroke="#1a8a49" stroke-width="1.100"/><path d="M10 10.600h4" stroke="#0f4d2a" stroke-width="1.100"/><path d="M2.500 6.100l3.700 5.200M6.200 6.100l-3.700 5.200" fill="none" stroke="#fff" stroke-width="1.450"/></svg></span><span class="t s" style="left:38.6px;top:7.8px;transform:scaleX(0.9694)">Book 5</span><span class="i" style="left:278px;top:10px"><svg width="12" height="9" viewBox="0 -0.7 12 9" ><path d="M3.300 8.400A2.550 2.550 0 0 1 2.600 3.400 3.300 3.300 0 0 1 9 3.300 2.550 2.550 0 0 1 8.900 8.400z" fill="none" stroke="#117ad8" stroke-width="1.400" stroke-linejoin="round"/></svg></span><span class="t" style="left:358.3px;top:7.8px;color:#6b6b6b;transform:scaleX(0.9774)">8/13/2020 12:34 AM</span><span class="t" style="left:502.6px;top:7.8px;color:#6b6b6b;transform:scaleX(0.9860)">Microsoft Excel W...</span><span class="t" style="left:666.6px;top:7.8px;color:#6b6b6b;transform:scaleX(0.8800)">0 KB</span></div>
  <div class="row" style="top:308px"><span class="i" style="left:19px;top:7px"><svg width="16" height="16" viewBox="0 0 16 16" ><path d="M4.500 1.500a1 1 0 0 1 1-1h6.400L15.500 4.100V14.500a1 1 0 0 1-1 1h-9a1 1 0 0 1-1-1z" fill="#fff" stroke="#6f6f6f" stroke-width="1.150"/><path d="M11.800 .8v3.400h3.400" fill="none" stroke="#8a8a8a" stroke-width=".9"/><rect x="0" y="3.800" width="8.500" height="9.200" fill="#147d43"/><path d="M10 6.500h4" stroke="#22c06c" stroke-width="1"/><path d="M10 8.600h4" stroke="#1a8a49" stroke-width="1.100"/><path d="M10 10.600h4" stroke="#0f4d2a" stroke-width="1.100"/><path d="M2.500 6.100l3.700 5.200M6.200 6.100l-3.700 5.200" fill="none" stroke="#fff" stroke-width="1.450"/></svg></span><span class="t s" style="left:38.6px;top:7.8px;transform:scaleX(0.9750)">Book 6</span><span class="i" style="left:278px;top:10px"><svg width="12" height="9" viewBox="0 -0.7 12 9" ><path d="M3.300 8.400A2.550 2.550 0 0 1 2.600 3.400 3.300 3.300 0 0 1 9 3.300 2.550 2.550 0 0 1 8.900 8.400z" fill="none" stroke="#117ad8" stroke-width="1.400" stroke-linejoin="round"/></svg></span><span class="t" style="left:358.3px;top:7.8px;color:#6b6b6b;transform:scaleX(0.9774)">8/13/2020 12:34 AM</span><span class="t" style="left:502.6px;top:7.8px;color:#6b6b6b;transform:scaleX(0.9860)">Microsoft Excel W...</span><span class="t" style="left:666.6px;top:7.8px;color:#6b6b6b;transform:scaleX(0.8800)">0 KB</span></div>
  <div class="row" style="top:339px"><span class="i" style="left:19px;top:7px"><svg width="16" height="16" viewBox="0 0 16 16" ><path d="M4.500 1.500a1 1 0 0 1 1-1h6.400L15.500 4.100V14.500a1 1 0 0 1-1 1h-9a1 1 0 0 1-1-1z" fill="#fff" stroke="#6f6f6f" stroke-width="1.150"/><path d="M11.800 .8v3.400h3.400" fill="none" stroke="#8a8a8a" stroke-width=".9"/><rect x="0" y="3.800" width="8.500" height="9.200" fill="#147d43"/><path d="M10 6.500h4" stroke="#22c06c" stroke-width="1"/><path d="M10 8.600h4" stroke="#1a8a49" stroke-width="1.100"/><path d="M10 10.600h4" stroke="#0f4d2a" stroke-width="1.100"/><path d="M2.500 6.100l3.700 5.200M6.200 6.100l-3.700 5.200" fill="none" stroke="#fff" stroke-width="1.450"/></svg></span><span class="t s" style="left:38.6px;top:7.8px;transform:scaleX(0.9762)">Book 7</span><span class="i" style="left:278px;top:10px"><svg width="12" height="9" viewBox="0 -0.7 12 9" ><path d="M3.300 8.400A2.550 2.550 0 0 1 2.600 3.400 3.300 3.300 0 0 1 9 3.300 2.550 2.550 0 0 1 8.900 8.400z" fill="none" stroke="#117ad8" stroke-width="1.400" stroke-linejoin="round"/></svg></span><span class="t" style="left:358.3px;top:7.8px;color:#6b6b6b;transform:scaleX(0.9774)">8/13/2020 12:34 AM</span><span class="t" style="left:502.6px;top:7.8px;color:#6b6b6b;transform:scaleX(0.9860)">Microsoft Excel W...</span><span class="t" style="left:666.6px;top:7.8px;color:#6b6b6b;transform:scaleX(0.8800)">0 KB</span></div>
  <div class="row" style="top:370px"><span class="i" style="left:19px;top:7px"><svg width="16" height="16" viewBox="0 0 16 16" ><path d="M4.500 1.500a1 1 0 0 1 1-1h6.400L15.500 4.100V14.500a1 1 0 0 1-1 1h-9a1 1 0 0 1-1-1z" fill="#fff" stroke="#6f6f6f" stroke-width="1.150"/><path d="M11.800 .8v3.400h3.400" fill="none" stroke="#8a8a8a" stroke-width=".9"/><rect x="0" y="3.800" width="8.500" height="9.200" fill="#147d43"/><path d="M10 6.500h4" stroke="#22c06c" stroke-width="1"/><path d="M10 8.600h4" stroke="#1a8a49" stroke-width="1.100"/><path d="M10 10.600h4" stroke="#0f4d2a" stroke-width="1.100"/><path d="M2.500 6.100l3.700 5.200M6.200 6.100l-3.700 5.200" fill="none" stroke="#fff" stroke-width="1.450"/></svg></span><span class="t s" style="left:38.6px;top:7.8px;transform:scaleX(0.9750)">Book 8</span><span class="i" style="left:278px;top:10px"><svg width="12" height="9" viewBox="0 -0.7 12 9" ><path d="M3.300 8.400A2.550 2.550 0 0 1 2.600 3.400 3.300 3.300 0 0 1 9 3.300 2.550 2.550 0 0 1 8.900 8.400z" fill="none" stroke="#117ad8" stroke-width="1.400" stroke-linejoin="round"/></svg></span><span class="t" style="left:358.3px;top:7.8px;color:#6b6b6b;transform:scaleX(0.9774)">8/13/2020 12:34 AM</span><span class="t" style="left:502.6px;top:7.8px;color:#6b6b6b;transform:scaleX(0.9860)">Microsoft Excel W...</span><span class="t" style="left:666.6px;top:7.8px;color:#6b6b6b;transform:scaleX(0.8800)">0 KB</span></div>
  <div class="row" style="top:401px"><span class="i" style="left:19px;top:7px"><svg width="16" height="16" viewBox="0 0 16 16" ><path d="M4.500 1.500a1 1 0 0 1 1-1h6.400L15.500 4.100V14.500a1 1 0 0 1-1 1h-9a1 1 0 0 1-1-1z" fill="#fff" stroke="#6f6f6f" stroke-width="1.150"/><path d="M11.800 .8v3.400h3.400" fill="none" stroke="#8a8a8a" stroke-width=".9"/><rect x="0" y="3.800" width="8.500" height="9.200" fill="#147d43"/><path d="M10 6.500h4" stroke="#22c06c" stroke-width="1"/><path d="M10 8.600h4" stroke="#1a8a49" stroke-width="1.100"/><path d="M10 10.600h4" stroke="#0f4d2a" stroke-width="1.100"/><path d="M2.500 6.100l3.700 5.200M6.200 6.100l-3.700 5.200" fill="none" stroke="#fff" stroke-width="1.450"/></svg></span><span class="t s" style="left:38.6px;top:7.8px;transform:scaleX(0.9750)">Book 9</span><span class="i" style="left:278px;top:10px"><svg width="12" height="9" viewBox="0 -0.7 12 9" ><path d="M3.300 8.400A2.550 2.550 0 0 1 2.600 3.400 3.300 3.300 0 0 1 9 3.300 2.550 2.550 0 0 1 8.900 8.400z" fill="none" stroke="#117ad8" stroke-width="1.400" stroke-linejoin="round"/></svg></span><span class="t" style="left:358.3px;top:7.8px;color:#6b6b6b;transform:scaleX(0.9774)">8/13/2020 12:34 AM</span><span class="t" style="left:502.6px;top:7.8px;color:#6b6b6b;transform:scaleX(0.9860)">Microsoft Excel W...</span><span class="t" style="left:666.6px;top:7.8px;color:#6b6b6b;transform:scaleX(0.8800)">0 KB</span></div>
  <div class="row" style="top:432px"><span class="i" style="left:19px;top:7px"><svg width="16" height="16" viewBox="0 0 16 16" ><path d="M4.500 1.500a1 1 0 0 1 1-1h6.400L15.500 4.100V14.500a1 1 0 0 1-1 1h-9a1 1 0 0 1-1-1z" fill="#fff" stroke="#6f6f6f" stroke-width="1.150"/><path d="M11.800 .8v3.400h3.400" fill="none" stroke="#8a8a8a" stroke-width=".9"/><rect x="0" y="3.800" width="8.500" height="9.200" fill="#147d43"/><path d="M10 6.500h4" stroke="#22c06c" stroke-width="1"/><path d="M10 8.600h4" stroke="#1a8a49" stroke-width="1.100"/><path d="M10 10.600h4" stroke="#0f4d2a" stroke-width="1.100"/><path d="M2.500 6.100l3.700 5.200M6.200 6.100l-3.700 5.200" fill="none" stroke="#fff" stroke-width="1.450"/></svg></span><span class="t s" style="left:38.6px;top:7.8px;transform:scaleX(0.9684)">Book 10</span><span class="i" style="left:278px;top:10px"><svg width="12" height="9" viewBox="0 -0.7 12 9" ><path d="M3.300 8.400A2.550 2.550 0 0 1 2.600 3.400 3.300 3.300 0 0 1 9 3.300 2.550 2.550 0 0 1 8.900 8.400z" fill="none" stroke="#117ad8" stroke-width="1.400" stroke-linejoin="round"/></svg></span><span class="t" style="left:358.3px;top:7.8px;color:#6b6b6b;transform:scaleX(0.9774)">8/13/2020 12:34 AM</span><span class="t" style="left:502.6px;top:7.8px;color:#6b6b6b;transform:scaleX(0.9860)">Microsoft Excel W...</span><span class="t" style="left:666.6px;top:7.8px;color:#6b6b6b;transform:scaleX(0.8800)">0 KB</span></div>
</main>
<div id="scroll"><div id="thumb"></div></div>
<div id="tip"><span class="t" style="left:8.5px;top:6.8px;color:#1b1b1b">Show or hide the details pane.</span></div>
</body>
</html>
